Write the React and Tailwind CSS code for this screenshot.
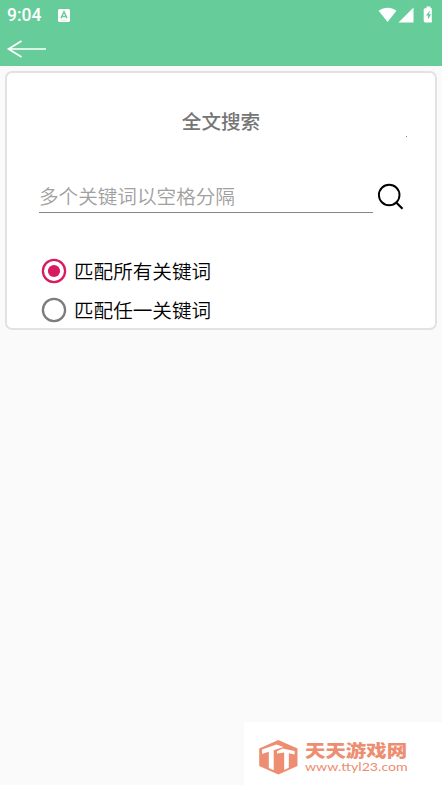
import React from "react";

function StatusBar() {
  return (
    <div className="flex h-[30px] items-center justify-between pl-[7px] pr-[7px]">
      <div className="flex items-center gap-[15px]">
        <span className="w-[36px] whitespace-nowrap font-[Roboto,sans-serif] text-[17.5px] leading-[30px] font-medium">9:04</span>
        <svg width="12" height="13" viewBox="0 0 12 13">
          <rect width="12" height="13" rx="1.5" fill="#fff" />
          <path d="M3 9.2 6 2.8 9 9.2M4.2 7.4h3.6" fill="none" stroke="#66cc99" strokeWidth="1.5" />
          <path d="M3 11.2h6" stroke="#c9eeda" strokeWidth=".7" />
        </svg>
      </div>
      <svg width="57" height="18" viewBox="0 0 57 18" fill="#fff" className="-mt-px">
        <path d="M.6 4.7C6 .7 13.4.7 18.4 4.7L9.6 16Z" />
        <path d="M35.5 1.5V16.4H20.5Z" />
        <path d="M47.5 2.2h1V.6h4v1.6h1.3V14.8Q54.5 16.4 53.3 16.4H47.2Q45.7 16.4 45.7 14.8V3.2Q45.7 2.2 47.5 2.2Z" />
        <path d="M51.8 4.5 47.9 9.4h2v4.1l3.3-5.2h-2.1Z" fill="#66cc99" />
      </svg>
    </div>
  );
}

function Option({ label, checked }) {
  return (
    <div className="flex h-[39px] items-center">
      <svg width="26" height="26" viewBox="0 0 26 26" className={checked ? "text-[#d81b60]" : "text-[#7c7c7c]"}>
        <circle cx="13" cy="13" r="11.1" fill="none" stroke="currentColor" strokeWidth="2.3" />
        {checked && <circle cx="13" cy="13" r="6.1" fill="currentColor" />}
      </svg>
      <span className="ml-[7px] text-[19.6px] leading-[39px] font-[350] text-black">{label}</span>
    </div>
  );
}

function Watermark() {
  return (
    <div className="flex h-[63px] w-[198px] bg-white pt-[17px] pl-[14px]">
      <svg width="41" height="36" viewBox="0 0 41 36" className="shrink-0">
        <path d="M20.3 1 39.5 9.5V27L20.3 35.5 1.2 27V9.5Z" fill="#ed8d71" />
        <path d="M4 10.6 18.5 5.5 25.5 8 15.7 11.2V31.3L10.8 29V12.8L4 15Z" fill="#fff" />
        <path d="M19 12.2 24.5 9.6 36.6 12V15.4L30.8 14.3V28.8L26.2 30.9V13.6L19 14.4Z" fill="#fff" />
      </svg>
      <div className="ml-[6px] whitespace-nowrap text-[#ed8d71]">
        <div className="h-[20px] w-[88px] origin-left scale-x-[1.16] text-[17.6px] leading-[22px] font-black">天天游戏网</div>
        <div className="w-[76px] origin-left scale-x-[1.23] font-[Lato,sans-serif] text-[11.5px] leading-[15px]">www.ttyl23.com</div>
      </div>
    </div>
  );
}

export default function App() {
  return (
    <main className="flex h-[785px] w-[442px] flex-col overflow-hidden bg-[#fafafa] font-['Noto_Sans_CJK_SC',sans-serif]">
      <header className="h-[66px] shrink-0 bg-[#66cc99] text-white">
        <StatusBar />
        <button aria-label="返回" className="ml-[6px] mt-[9px] block">
          <svg width="42" height="20" viewBox="0 0 42 20" fill="none" stroke="#fff" strokeWidth="1.7">
            <path d="M15.5 2 2.5 10 15.5 18M2.5 10H40" />
          </svg>
        </button>
      </header>
      <section className="mx-[5px] mt-[5px] flex h-[259px] shrink-0 flex-col rounded-[7px] border-2 border-[#e2e2e4] bg-white">
        <h1 className="mt-[33px] text-center text-[19.6px] leading-[29px] font-medium text-[#757575]">全文搜索</h1>
        <div className="mt-px flex justify-end pr-[28px]">
          <span className="h-px w-px bg-[#8a8020]" />
        </div>
        <div className="mt-[38px] ml-[32px] flex h-[38px] items-start">
          <div className="h-[38px] w-[334px] border-b-[1.5px] border-[#858585] pt-[4px]">
            <span className="block text-[19.6px] leading-[34px] font-[350] text-[#a0a0a0]">多个关键词以空格分隔</span>
          </div>
          <svg width="28" height="28" viewBox="0 0 28 28" fill="none" stroke="#000" className="ml-[4px] mt-[8px]">
            <circle cx="12.2" cy="12" r="10.3" strokeWidth="1.9" />
            <path d="m19 19.2 6.5 6.5" strokeWidth="2.2" />
          </svg>
        </div>
        <div className="mt-[38px] ml-[34px]">
          <Option label="匹配所有关键词" checked />
          <Option label="匹配任一关键词" />
        </div>
      </section>
      <footer className="mt-auto flex justify-end">
        <Watermark />
      </footer>
    </main>
  );
}
